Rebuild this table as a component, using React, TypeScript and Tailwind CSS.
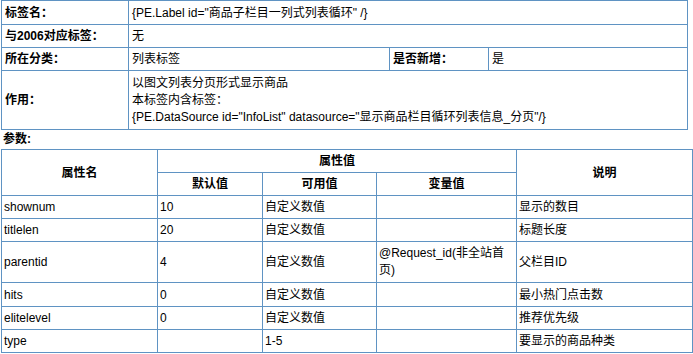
import React from 'react';

const cell = 'border border-[#5f93c3] align-middle';

const params = [
  { name: 'shownum', def: '10', avail: '自定义数值', vari: '', desc: '显示的数目', h: 'h-[23px]' },
  { name: 'titlelen', def: '20', avail: '自定义数值', vari: '', desc: '标题长度', h: 'h-[23px]' },
  { name: 'parentid', def: '4', avail: '自定义数值', vari: '@Request_id(非全站首页)', desc: '父栏目ID', h: 'h-[41px]' },
  { name: 'hits', def: '0', avail: '自定义数值', vari: '', desc: '最小热门点击数', h: 'h-[24px]' },
  { name: 'elitelevel', def: '0', avail: '自定义数值', vari: '', desc: '推荐优先级', h: 'h-[23px]' },
  { name: 'type', def: '', avail: '1-5', vari: '', desc: '要显示的商品种类', h: 'h-[23px]' },
];

export default function App() {
  return (
    <div
      className="w-[693px] h-[354px] bg-white pl-[1px] text-[12px] text-black overflow-hidden"
      style={{ fontFamily: '"Liberation Sans", "Noto Sans CJK SC", sans-serif' }}
    >
      {/* tag info */}
      <table className="table-fixed border-collapse w-[686px]">
        <colgroup>
          <col className="w-[127px]" />
          <col className="w-[261px]" />
          <col className="w-[99px]" />
          <col className="w-[199px]" />
        </colgroup>
        <tbody>
          <tr className="h-[24px]">
            <td className={`${cell} px-[3px] font-bold`}>标签名：</td>
            <td className={`${cell} px-[3px]`} colSpan={3}>{'{PE.Label id="商品子栏目一列式列表循环" /}'}</td>
          </tr>
          <tr className="h-[23px]">
            <td className={`${cell} px-[3px] font-bold`}>与2006对应标签：</td>
            <td className={`${cell} px-[3px]`} colSpan={3}>无</td>
          </tr>
          <tr className="h-[23px]">
            <td className={`${cell} px-[3px] font-bold`}>所在分类：</td>
            <td className={`${cell} px-[3px]`}>列表标签</td>
            <td className={`${cell} px-[3px] font-bold`}>是否新增：</td>
            <td className={`${cell} px-[3px]`}>是</td>
          </tr>
          <tr className="h-[59px]">
            <td className={`${cell} px-[3px] font-bold`}>作用：</td>
            <td className={`${cell} px-[3px] leading-[17px]`} colSpan={3}>
              <div>以图文列表分页形式显示商品</div>
              <div>本标签内含标签：</div>
              <div>{'{PE.DataSource id="InfoList" datasource="显示商品栏目循环列表信息_分页"/}'}</div>
            </td>
          </tr>
        </tbody>
      </table>

      <div className="font-bold h-[19px] leading-[19px] pl-[2px]">参数:</div>

      {/* parameter table */}
      <table className="table-fixed border-collapse w-[691px]">
        <colgroup>
          <col className="w-[156px]" />
          <col className="w-[105px]" />
          <col className="w-[114px]" />
          <col className="w-[140px]" />
          <col className="w-[176px]" />
        </colgroup>
        <tbody>
          <tr className="h-[23px]">
            <td className={`${cell} text-center font-bold`} rowSpan={2}>属性名</td>
            <td className={`${cell} text-center font-bold`} colSpan={3}>属性值</td>
            <td className={`${cell} text-center font-bold`} rowSpan={2}>说明</td>
          </tr>
          <tr className="h-[23px]">
            <td className={`${cell} text-center font-bold`}>默认值</td>
            <td className={`${cell} text-center font-bold`}>可用值</td>
            <td className={`${cell} text-center font-bold`}>变量值</td>
          </tr>
          {params.map((p) => (
            <tr key={p.name} className={p.h}>
              <td className={`${cell} px-[2px]`}>{p.name}</td>
              <td className={`${cell} px-[2px]`}>{p.def}</td>
              <td className={`${cell} px-[2px]`}>{p.avail}</td>
              <td className={`${cell} px-[2px] leading-[17px]`}>{p.vari}</td>
              <td className={`${cell} px-[2px]`}>{p.desc}</td>
            </tr>
          ))}
        </tbody>
      </table>
    </div>
  );
}
